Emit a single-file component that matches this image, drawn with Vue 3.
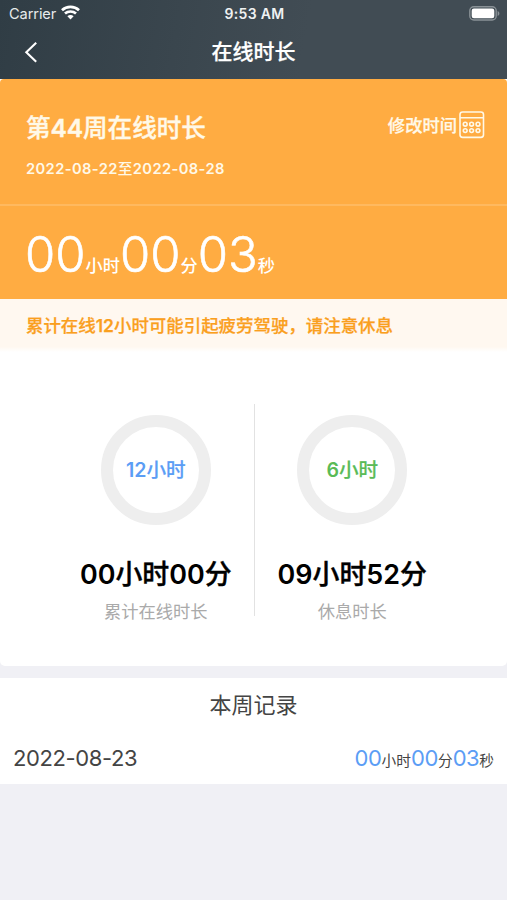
<script setup>
const dots = [0, 1, 2, 3, 4, 5].map((i) => ({
  x: 6.2 + (i % 3) * 6.4,
  y: 13.2 + Math.floor(i / 3) * 6.4
}))
const stats = [
  { goal: ['12', '小时'], tone: 'blue', value: ['00', '小时', '00', '分'], label: '累计在线时长' },
  { goal: ['6', '小时'], tone: 'green', value: ['09', '小时', '52', '分'], label: '休息时长' }
]
const total = [['00', '小时'], ['00', '分'], ['03', '秒']]
</script>

<template>
  <div class="screen">
    <header class="top">
      <div class="status">
        <div class="carrier">
          <span>Carrier</span>
          <svg width="19" height="15" viewBox="0 0 19 15" fill="none" stroke="#fff" stroke-width="2.7">
            <path d="M1 5.2C5.7.8 13.3.8 18 5.2" />
            <path d="M4 8.6c3-2.8 8-2.8 11 0" />
            <path d="M6.4 11.2c1.8-1.6 4.4-1.6 6.2 0L9.5 14.4z" fill="#fff" stroke="none" />
          </svg>
        </div>
        <span class="clock">9:53 AM</span>
        <svg class="battery" width="31" height="15" viewBox="0 0 31 15">
          <rect x=".8" y=".8" width="26.4" height="13.2" rx="4" fill="none" stroke="#899196" stroke-width="1.4" />
          <rect x="2.7" y="2.6" width="22.6" height="9.6" rx="2.2" fill="#fff" />
          <path d="M28.6 5v5c2.4-.9 2.4-4.1 0-5z" fill="#899196" />
        </svg>
      </div>
      <div class="nav">
        <svg class="back" width="14" height="22" viewBox="0 0 14 22" fill="none" stroke="#fff" stroke-width="2.1">
          <path d="M12.2 1.7 2.3 11.2l9.9 9.5" />
        </svg>
        <h1>在线时长</h1>
      </div>
    </header>

    <main class="summary">
      <section class="week">
        <div>
          <h2>第<b>44</b>周在线时长</h2>
          <p class="range">2022-08-22<span>至</span>2022-08-28</p>
        </div>
        <div class="edit">
          <span>修改时间</span>
          <svg width="26" height="28" viewBox="0 0 26 28" fill="none" stroke="#fff9e8" stroke-width="1.6">
            <rect x="1" y="1" width="23.5" height="25.4" rx="2.6" />
            <path d="M1 6.8h23.5" />
            <circle v-for="(d, i) in dots" :key="i" :cx="d.x" :cy="d.y" r="1.9" />
          </svg>
        </div>
      </section>
      <section class="total">
        <template v-for="(p, i) in total" :key="i"><b>{{ p[0] }}</b><span>{{ p[1] }}</span></template>
      </section>
      <p class="notice">累计在线<b>12</b>小时可能引起疲劳驾驶，请注意休息</p>
      <section class="stats">
        <div v-for="s in stats" :key="s.label" class="stat">
          <div class="ring" :class="s.tone"><b>{{ s.goal[0] }}</b><span>{{ s.goal[1] }}</span></div>
          <div class="value"><b>{{ s.value[0] }}</b><span>{{ s.value[1] }}</span><b>{{ s.value[2] }}</b><span>{{ s.value[3] }}</span></div>
          <span class="label">{{ s.label }}</span>
        </div>
      </section>
    </main>

    <section class="records">
      <h3>本周记录</h3>
      <div class="record">
        <span class="date">2022-08-23</span>
        <div class="duration">
          <template v-for="(p, i) in total" :key="i"><b>{{ p[0] }}</b><span>{{ p[1] }}</span></template>
        </div>
      </div>
    </section>
  </div>
</template>

<style>
body {
  background: #f0f0f5;
}
</style>

<style scoped>
.screen {
  width: 507px;
  height: 900px;
  overflow: hidden;
  background: #f0f0f5;
  font-family: Inter, "Noto Sans CJK SC", sans-serif;
  color: #444;
}
h1, h2, h3, p {
  margin: 0;
}
svg {
  display: block;
  flex: none;
}
.top {
  height: 79px;
  background: linear-gradient(100deg, #303d45 0%, #3a464e 35%, #414c54 60%, #414c54 100%);
  color: #fff;
}
.status {
  height: 27px;
  padding: 0 7px 0 9px;
  display: grid;
  grid-template-columns: 1fr auto 1fr;
  align-items: center;
  font-size: 14.6px;
}
.carrier {
  display: flex;
  align-items: center;
  gap: 5px;
  color: #e8ebec;
  letter-spacing: -.1px;
}
.carrier svg {
  margin-top: -2px;
}
.clock {
  font-weight: 600;
  font-size: 14px;
  letter-spacing: .3px;
  color: #eff1f2;
}
.battery {
  justify-self: end;
}
.nav {
  height: 50px;
  padding: 0 24px;
  display: grid;
  grid-template-columns: 1fr auto 1fr;
  align-items: center;
}
h1 {
  font-size: 21px;
  line-height: 30px;
  font-weight: 500;
  -webkit-text-stroke: .25px;
}
.summary {
  height: 587px;
  background: #fff;
  border-radius: 0 0 5px 5px;
  overflow: hidden;
}
.week {
  height: 125px;
  border-bottom: 2px solid #ffb95f;
  border-radius: 4px 4px 0 0;
  background: #ffac42;
  padding: 0 22px 0 26px;
  display: flex;
  justify-content: space-between;
  color: #fff9e8;
}
h2 {
  margin-top: 31px;
  font-size: 24.6px;
  line-height: 36px;
  font-weight: 500;
  -webkit-text-stroke: .35px;
}
h2 b {
  font-weight: 600;
  letter-spacing: -.2px;
}
.range {
  margin-top: 12px;
  font-size: 14.7px;
  line-height: 22px;
  font-weight: 600;
  letter-spacing: .39px;
}
.range span {
  font-weight: 500;
}
.edit {
  height: 28px;
  margin-top: 32px;
  display: flex;
  align-items: center;
  gap: 2px;
  font-size: 17.3px;
  font-weight: 500;
}
.edit span {
  -webkit-text-stroke: .25px;
  margin-top: -2px;
}
.total {
  height: 93px;
  padding-left: 25px;
  background: #ffac42;
  color: #fff;
  line-height: 98px;
  font-size: 17.2px;
  font-weight: 500;
  white-space: nowrap;
  overflow: hidden;
}
.total b {
  font-size: 49px;
  font-weight: 300;
  -webkit-text-stroke: .6px;
}
.notice {
  height: 53px;
  padding-left: 26px;
  background: linear-gradient(#fff8f0 90%, #fff);
  color: #fa9f1e;
  font-size: 17.45px;
  line-height: 53px;
  font-weight: 500;
  -webkit-text-stroke: .25px;
}
.notice b {
  font-weight: 600;
}
.stats {
  margin: 52px 57px 0;
  height: 212px;
  display: grid;
  grid-template-columns: 1fr 1fr;
}
.stat {
  height: 212px;
  box-sizing: border-box;
  display: flex;
  flex-direction: column;
  align-items: center;
}
.stat:first-child {
  padding-left: 1px;
}
.stat + .stat {
  border-left: 1px solid #e2e2e2;
}
.ring {
  flex: none;
  box-sizing: border-box;
  width: 110px;
  height: 110px;
  margin-top: 11px;
  border: 12px solid #eee;
  border-radius: 50%;
  display: flex;
  align-items: center;
  justify-content: center;
  font-size: 19.6px;
  line-height: 28px;
  font-weight: 500;
}
.ring b, .value b {
  font-weight: 600;
}
.ring span {
  -webkit-text-stroke: .2px;
}
.blue {
  color: #5b9df5;
}
.green {
  color: #5abb57;
}
.value {
  flex: none;
  margin-top: 29px;
  font-size: 26.9px;
  line-height: 40px;
  height: 40px;
  font-weight: 500;
  color: #000;
  white-space: nowrap;
}
.value span {
  -webkit-text-stroke: .4px;
}
.label {
  margin-top: 5px;
  font-size: 17.3px;
  line-height: 26px;
  height: 17px;
  color: #aaa;
}
.records {
  margin-top: 12px;
  height: 106px;
  background: #fff;
}
h3 {
  height: 55px;
  text-align: center;
  font-size: 22px;
  line-height: 54px;
  font-weight: 400;
}
.record {
  height: 51px;
  padding: 0 13px;
  display: flex;
  justify-content: space-between;
  font-size: 22px;
  line-height: 51px;
}
.date {
  letter-spacing: -.4px;
}
.duration {
  font-size: 14.7px;
}
.duration b {
  font-size: 22px;
  font-weight: 400;
  letter-spacing: -.4px;
  color: #5b9df5;
}
</style>
